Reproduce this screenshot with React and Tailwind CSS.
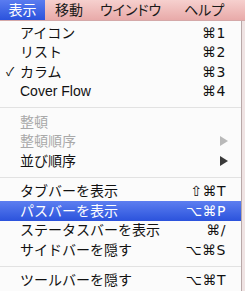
const font = { fontFamily: '"Liberation Sans", "Noto Sans CJK JP", sans-serif' };

const items = [
  { label: 'アイコン', key: '⌘1' },
  { label: 'リスト', key: '⌘2' },
  { label: 'カラム', key: '⌘3', checked: true },
  { label: 'Cover Flow', key: '⌘4' },
  'sep',
  { label: '整頓', disabled: true },
  { label: '整頓順序', disabled: true, sub: true },
  { label: '並び順序', sub: true },
  'sep',
  { label: 'タブバーを表示', key: '⇧⌘T' },
  { label: 'パスバーを表示', key: '⌥⌘P', active: true },
  { label: 'ステータスバーを表示', key: '⌘/' },
  { label: 'サイドバーを隠す', key: '⌥⌘S' },
  'sep',
  { label: 'ツールバーを隠す', key: '⌥⌘T' },
];

function Row({ item }) {
  const tone = item.active
    ? 'bg-gradient-to-b from-[#5d7ef0] to-[#2b52dc] text-white'
    : item.disabled
      ? 'text-[#a9a9a9]'
      : 'text-[#111]';
  return (
    <div className={`relative flex items-center h-[19.5px] pl-[20px] pr-[15px] text-[14px] ${tone}`}>
      {item.checked && <span className="absolute left-[6px] text-[12px]">✓</span>}
      <span className="flex-1 leading-none">{item.label}</span>
      {item.key && (
        <span className="leading-none text-[14px]" style={{ fontFamily: '"DejaVu Sans", "Liberation Sans", sans-serif', letterSpacing: '0.5px' }}>
          {item.key}
        </span>
      )}
      {item.sub && (
        <svg width="8" height="10" viewBox="0 0 8 10" className="mr-[-2px]">
          <path d="M0 0 L8 5 L0 10 Z" fill={item.disabled ? '#b9b9b9' : '#3a3a3a'} />
        </svg>
      )}
    </div>
  );
}

export default function App() {
  return (
    <div className="w-[245px] h-[291px] overflow-hidden bg-[#efe3e3]" style={font}>
      <div
        className="flex h-[21px] items-stretch bg-gradient-to-b from-[#f6d0ce] to-[#e8aaa9] text-[14px] text-[#1a1a1a] border-b border-[#d4a8a8]"
        style={{ fontFeatureSettings: '"palt"' }}
      >
        <div className="flex items-center w-[45px] justify-center bg-gradient-to-b from-[#5a7cf0] to-[#2b52dc] text-white">表示</div>
        <div className="flex items-center pl-[10px]">移動</div>
        <div className="flex items-center pl-[17px]">ウインドウ</div>
        <div className="flex items-center pl-[23px]">ヘルプ</div>
      </div>
      <div className="w-[242px] h-[270px] bg-[#fbfbfb] border-r border-[#b8a8a8] pt-[2px]">
        {items.map((it, i) =>
          it === 'sep' ? (
            <div key={i} className="h-[11px] pt-[6px]">
              <div className="h-px bg-[#e2e2e2]" />
            </div>
          ) : (
            <Row key={i} item={it} />
          )
        )}
      </div>
    </div>
  );
}
